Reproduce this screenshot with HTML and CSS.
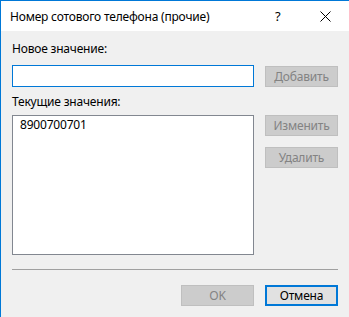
FILE: index.html
```html
<!DOCTYPE html>
<html lang="ru">
<head>
    <meta charset="UTF-8">
    <title>Номер сотового телефона (прочие)</title>
    <link rel="stylesheet" href="styles.css">
</head>
<body>

    <div class="window">
        <div class="titlebar">
            <span class="title">Номер сотового телефона (прочие)</span>
            <span class="help">?</span>
            <svg class="close" width="11" height="11" viewBox="0 0 11 11">
                <path d="M0.5 0.5 L10.5 10.5 M10.5 0.5 L0.5 10.5" stroke="#000" stroke-width="1" fill="none"/>
            </svg>
        </div>

        <div class="content">
            <div class="label">Новое значение:</div>
            <div class="row">
                <input type="text" class="textbox">
                <button class="btn" disabled>Добавить</button>
            </div>

            <div class="label label-list">Текущие значения:</div>
            <div class="row">
                <div class="listbox">
                    <div class="item">8900700701</div>
                </div>
                <div class="side-buttons">
                    <button class="btn" disabled>Изменить</button>
                    <button class="btn" disabled>Удалить</button>
                </div>
            </div>

            <div class="separator"></div>

            <div class="footer">
                <button class="btn" disabled>OK</button>
                <button class="btn btn-default">Отмена</button>
            </div>
        </div>
    </div>

</body>
</html>
```

FILE: styles.css
```css
body {
    margin: 0;
    font-family: "Noto Sans", "Open Sans", sans-serif;
    font-size: 12px;
    letter-spacing: -0.2px;
    color: #000;
    background-color: #f0f0f0;
}
.window {
    width: 348px;
    height: 316px;
    border-left: 1px solid #0078d7;
    border-top: 1px solid #0078d7;
    background-color: #f0f0f0;
}
.titlebar {
    height: 30px;
    background-color: #fff;
    display: flex;
    align-items: center;
    padding-left: 9px;
}
.title {
    flex: 1;
    font-size: 12px;
}
.help {
    width: 12px;
    margin-right: 33px;
    font-size: 13px;
}
.close {
    margin-right: 18px;
}
.content {
    padding: 10px 11px 0 11px;
}
.label {
    line-height: 16px;
    height: 16px;
}
.label-list {
    margin-top: 7px;
}
.row {
    display: flex;
    justify-content: space-between;
    align-items: flex-start;
    margin-top: 8px;
}
.label-list + .row {
    margin-top: 5px;
}
.textbox {
    box-sizing: border-box;
    width: 242px;
    height: 22px;
    margin: 0;
    border: 1px solid #0078d7;
    background: #fff;
    outline: none;
}
.btn {
    box-sizing: border-box;
    width: 73px;
    height: 21px;
    margin: 0;
    padding: 0;
    font-family: inherit;
    font-size: 12px;
    letter-spacing: -0.2px;
    color: #000;
    background-color: #e1e1e1;
    border: 1px solid #adadad;
}
.btn:disabled {
    color: #838383;
    background-color: #cccccc;
    border-color: #bfbfbf;
}
.row > .btn {
    margin-top: 1px;
}
.listbox {
    box-sizing: border-box;
    width: 242px;
    height: 140px;
    border: 1px solid #828790;
    background: #fff;
    padding: 1px 7px;
}
.item {
    line-height: 16px;
}
.side-buttons {
    display: flex;
    flex-direction: column;
    gap: 11px;
}
.separator {
    height: 1px;
    margin-top: 14px;
    background-color: #a0a0a0;
}
.footer {
    display: flex;
    justify-content: flex-end;
    gap: 11px;
    margin-top: 15px;
}
.btn-default {
    border: 2px solid #0078d7;
}
```
